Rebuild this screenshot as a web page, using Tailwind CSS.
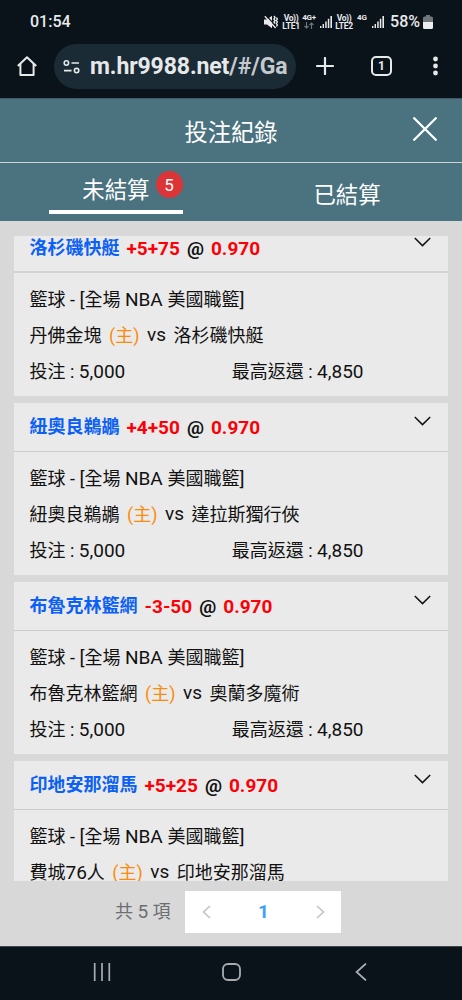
<!DOCTYPE html>
<html lang="zh-Hant">
<head>
    <meta charset="UTF-8">
    <meta name="viewport" content="width=device-width, initial-scale=1.0">
    <title>投注紀錄</title>
    <script src="https://cdn.jsdelivr.net/npm/@tailwindcss/browser@4"></script>
</head>
<body class="bg-[#0b131a] font-[Roboto,'Noto_Sans_CJK_TC',sans-serif]">
    <div class="h-[1000px] w-[462px] flex flex-col overflow-hidden">
        <!-- status bar -->
        <div class="h-11 shrink-0 flex items-center justify-between pl-[30px] pr-[29px] text-[#e8eaeb]">
            <span class="text-base font-medium">01:54</span>
            <div class="flex items-center">
                <svg class="w-[14px] h-[14px]" viewBox="0 0 14 14" fill="none" stroke="currentColor">
                    <path fill="currentColor" stroke="none" d="M0 4.5h3L8 .8v12.4L3 9.5H0z"/>
                    <path stroke="#0b131a" stroke-width="1.2" d="M2 .4l10.8 11.8"/>
                    <path stroke-width="1.3" d="M.8 1.2l10.8 11.8"/>
                    <path stroke-width="1.4" d="M10 1l1 1.5-1 1.5 1 1.5-1 1.5 1 1.5M12.4 2.5l.9 1.5-.9 1.5.9 1.5-.9 1.5.9 1.5-.9 1.5"/>
                </svg>
                <div class="ml-[3px] w-[20px] text-center text-[8.5px] leading-[8px] font-bold whitespace-nowrap">
                    <div class="tracking-tighter">Vo))</div>
                    <div class="tracking-[-0.3px]">LTE1</div>
                </div>
                <div class="w-[16px] h-4 flex flex-col items-center text-[8px] leading-[8px] font-bold whitespace-nowrap">
                    <div class="tracking-tight">4G+</div>
                    <svg class="w-[10px] h-[7px] text-[#71787d]" viewBox="0 0 10 7" fill="none" stroke="currentColor" stroke-width="1.1">
                        <path d="M2.5 0v6M.5 4l2 2 2-2M7.5 7V1M5.5 3l2-2 2 2"/>
                    </svg>
                </div>
                <svg class="ml-[3px] w-[12px] h-[12px]" viewBox="0 0 12 12" fill="currentColor">
                    <path d="M0 10h1.4v2H0zM2.6 8H4v4H2.6zM5.2 5.5h1.5V12H5.2zM7.8 2.8h1.5V12H7.8zM10.4 0H12v12h-1.6z"/>
                </svg>
                <div class="ml-[2px] w-[20px] text-center text-[8.5px] leading-[8px] font-bold whitespace-nowrap">
                    <div class="tracking-tighter">Vo))</div>
                    <div class="tracking-[-0.3px]">LTE2</div>
                </div>
                <div class="ml-[2px] w-[12px] h-4 text-center text-[8px] leading-[8px] font-bold">4G</div>
                <svg class="ml-[4px] w-[12px] h-[12px]" viewBox="0 0 12 12" fill="currentColor">
                    <path d="M0 10h1.4v2H0zM2.6 8H4v4H2.6zM5.2 5.5h1.5V12H5.2zM7.8 2.8h1.5V12H7.8zM10.4 0H12v12h-1.6z"/>
                </svg>
                <span class="ml-[6px] text-base font-medium">58%</span>
                <svg class="ml-[3px] w-[10px] h-[14px]" viewBox="0 0 10 14">
                    <path fill="#70767a" d="M3 0h4v1.5h1.5A1.5 1.5 0 0 1 10 3v4H0V3a1.5 1.5 0 0 1 1.5-1.5H3z"/>
                    <path fill="#eceeef" d="M0 7h10v5.5a1.5 1.5 0 0 1-1.5 1.5h-7A1.5 1.5 0 0 1 0 12.5z"/>
                </svg>
            </div>
        </div>

        <!-- browser bar -->
        <div class="h-[54px] shrink-0 flex items-start text-[#e6e9ea]">
            <svg class="ml-[17px] mt-[12px] w-5 h-5" viewBox="0 0 20 20" fill="none" stroke="currentColor" stroke-width="2" stroke-linejoin="round">
                <path d="M.8 10L10 1.2 19.2 10M3.4 8v11h13.2V8"/>
            </svg>
            <div class="ml-[17px] w-[242px] h-[45px] rounded-full bg-[#1b2b35] flex items-center pl-[9px] pr-[8px]">
                <svg class="w-[17px] h-[14px] shrink-0" viewBox="0 0 17 14" fill="none" stroke="currentColor" stroke-width="1.6">
                    <circle cx="3.4" cy="3" r="2.2"/>
                    <circle cx="13.6" cy="10.6" r="2.2"/>
                    <path d="M8.5 3H16M1 10.6h7.5"/>
                </svg>
                <div class="ml-[10px] mt-px w-[197px] overflow-hidden whitespace-nowrap text-[23px] leading-[30px] font-bold tracking-[-0.1px]">m.hr9988.net<span class="text-[#c3c9cd]">/#/Ga</span></div>
            </div>
            <svg class="ml-[20px] mt-[13px] w-[18px] h-[18px]" viewBox="0 0 18 18" stroke="currentColor" stroke-width="2.2" stroke-linecap="round">
                <path d="M9 1v16M1 9h16"/>
            </svg>
            <div class="ml-[37px] mt-[12px] w-[21px] h-5 rounded-[5px] border-2 border-current flex items-center justify-center text-[12px] font-bold">1</div>
            <svg class="ml-[41px] mt-[12px] w-[5px] h-5" viewBox="0 0 5 20" fill="currentColor">
                <circle cx="2.5" cy="3" r="2.4"/>
                <circle cx="2.5" cy="10" r="2.4"/>
                <circle cx="2.5" cy="17" r="2.4"/>
            </svg>
        </div>

        <!-- page title -->
        <header class="h-[65px] shrink-0 relative flex items-center justify-center bg-[#4a727f] border-t border-t-[#3f5a64] border-b border-b-[#cdd3d7] text-white">
            <h1 class="text-[23.3px] leading-8 pt-[4px]">投注紀錄</h1>
            <svg class="absolute right-[25px] top-[18px] w-6 h-6" viewBox="0 0 24 24" stroke="currentColor" stroke-width="2.3" stroke-linecap="round">
                <path d="M1.2 1.2l21.6 21.6M22.8 1.2L1.2 22.8"/>
            </svg>
        </header>

        <!-- tabs -->
        <nav class="h-[58px] shrink-0 grid grid-cols-2 bg-[#4a727f] text-white text-[22.4px] leading-8">
            <div class="flex justify-center">
                <div class="w-[134px] h-[51px] border-b-4 border-white flex justify-end">
                    <span class="pt-[11px] whitespace-nowrap">未結算</span>
                    <span class="ml-[6px] mt-[8px] w-[27px] h-[27px] rounded-full bg-[#dc3538] flex items-center justify-center text-[17px] shrink-0">5</span>
                </div>
            </div>
            <div class="pt-[16px] pl-px text-center">已結算</div>
        </nav>

        <!-- records -->
        <main class="h-[725px] shrink-0 bg-[#d8d8d8] pt-[15px] text-lg text-[#111]">
            <div class="mx-[14px] h-[645px] overflow-hidden">
                <div class="-mt-[12px] flex flex-col gap-[7px]">
                    <section class="h-[172px] shrink-0 bg-[#eaeaea]">
                        <div class="h-[49px] border-b-2 border-[#d3d3d3] pl-[15.5px] pr-4 flex justify-between font-bold">
                            <div class="flex items-start gap-[7px] pt-[10px]">
                                <span class="text-[#0b60f5]">洛杉磯快艇</span>
                                <span class="text-[19px] text-[#fb0007]">+5+75</span>
                                <span class="text-[19px]">@</span>
                                <span class="text-[19px] text-[#fb0007]">0.970</span>
                            </div>
                            <svg class="mt-[13px] mr-[1px] w-[17px] h-[10px]" viewBox="0 0 17 10" fill="none" stroke="currentColor" stroke-width="1.5"><path d="M.8 1l7.7 7.6L16.2 1"/></svg>
                        </div>
                        <div class="pl-[15.5px] pr-4 pt-[9px] leading-9">
                            <div>籃球 - <span class="text-[19px]">[</span>全場 <span class="text-[19px]">NBA </span>美國職籃<span class="text-[19px]">]</span></div>
                            <div class="flex gap-[7.5px]"><span>丹佛金塊</span><span class="text-[#fa8c0c]">(主)</span><span class="-mt-px text-[19px]">vs</span><span>洛杉磯快艇</span></div>
                            <div class="grid grid-cols-2"><span>投注 : <span class="text-[19px]">5,000</span></span><span class="pl-px">最高返還 : <span class="text-[19px]">4,850</span></span></div>
                        </div>
                    </section>

                    <section class="h-[172px] shrink-0 bg-[#eaeaea]">
                        <div class="h-[49px] border-b border-[#cbcbcb] pl-[15.5px] pr-4 flex justify-between font-bold">
                            <div class="flex items-start gap-[7px] pt-[10px]">
                                <span class="text-[#0b60f5]">紐奧良鵜鶘</span>
                                <span class="text-[19px] text-[#fb0007]">+4+50</span>
                                <span class="text-[19px]">@</span>
                                <span class="text-[19px] text-[#fb0007]">0.970</span>
                            </div>
                            <svg class="mt-[13px] mr-[1px] w-[17px] h-[10px]" viewBox="0 0 17 10" fill="none" stroke="currentColor" stroke-width="1.5"><path d="M.8 1l7.7 7.6L16.2 1"/></svg>
                        </div>
                        <div class="pl-[15.5px] pr-4 pt-[9px] leading-9">
                            <div>籃球 - <span class="text-[19px]">[</span>全場 <span class="text-[19px]">NBA </span>美國職籃<span class="text-[19px]">]</span></div>
                            <div class="flex gap-[7.5px]"><span>紐奧良鵜鶘</span><span class="text-[#fa8c0c]">(主)</span><span class="-mt-px text-[19px]">vs</span><span>達拉斯獨行俠</span></div>
                            <div class="grid grid-cols-2"><span>投注 : <span class="text-[19px]">5,000</span></span><span class="pl-px">最高返還 : <span class="text-[19px]">4,850</span></span></div>
                        </div>
                    </section>

                    <section class="h-[172px] shrink-0 bg-[#eaeaea]">
                        <div class="h-[49px] border-b border-[#cbcbcb] pl-[15.5px] pr-4 flex justify-between font-bold">
                            <div class="flex items-start gap-[7px] pt-[10px]">
                                <span class="text-[#0b60f5]">布魯克林籃網</span>
                                <span class="text-[19px] text-[#fb0007]">-3-50</span>
                                <span class="text-[19px]">@</span>
                                <span class="text-[19px] text-[#fb0007]">0.970</span>
                            </div>
                            <svg class="mt-[13px] mr-[1px] w-[17px] h-[10px]" viewBox="0 0 17 10" fill="none" stroke="currentColor" stroke-width="1.5"><path d="M.8 1l7.7 7.6L16.2 1"/></svg>
                        </div>
                        <div class="pl-[15.5px] pr-4 pt-[9px] leading-9">
                            <div>籃球 - <span class="text-[19px]">[</span>全場 <span class="text-[19px]">NBA </span>美國職籃<span class="text-[19px]">]</span></div>
                            <div class="flex gap-[7.5px]"><span>布魯克林籃網</span><span class="text-[#fa8c0c]">(主)</span><span class="-mt-px text-[19px]">vs</span><span>奧蘭多魔術</span></div>
                            <div class="grid grid-cols-2"><span>投注 : <span class="text-[19px]">5,000</span></span><span class="pl-px">最高返還 : <span class="text-[19px]">4,850</span></span></div>
                        </div>
                    </section>

                    <section class="h-[172px] shrink-0 bg-[#eaeaea]">
                        <div class="h-[49px] border-b border-[#cbcbcb] pl-[15.5px] pr-4 flex justify-between font-bold">
                            <div class="flex items-start gap-[7px] pt-[10px]">
                                <span class="text-[#0b60f5]">印地安那溜馬</span>
                                <span class="text-[19px] text-[#fb0007]">+5+25</span>
                                <span class="text-[19px]">@</span>
                                <span class="text-[19px] text-[#fb0007]">0.970</span>
                            </div>
                            <svg class="mt-[13px] mr-[1px] w-[17px] h-[10px]" viewBox="0 0 17 10" fill="none" stroke="currentColor" stroke-width="1.5"><path d="M.8 1l7.7 7.6L16.2 1"/></svg>
                        </div>
                        <div class="pl-[15.5px] pr-4 pt-[9px] leading-9">
                            <div>籃球 - <span class="text-[19px]">[</span>全場 <span class="text-[19px]">NBA </span>美國職籃<span class="text-[19px]">]</span></div>
                            <div class="flex gap-[7.5px]"><span>費城<span class="text-[19px]">76</span>人</span><span class="text-[#fa8c0c]">(主)</span><span class="-mt-px text-[19px]">vs</span><span>印地安那溜馬</span></div>
                        </div>
                    </section>
                </div>
            </div>

            <!-- pagination -->
            <div class="mt-[10px] ml-[115px] flex items-center text-[#6c6e72]">
                <span class="w-[70px] whitespace-nowrap">共 <span class="text-[19px]">5</span> 項</span>
                <div class="w-[156px] h-[42px] bg-white flex items-center justify-between pl-[17px] pr-[16px]">
                    <svg class="w-[9px] h-[14px] text-[#c0c4cc]" viewBox="0 0 9 14" fill="none" stroke="currentColor" stroke-width="1.7"><path d="M8 1L1.5 7 8 13"/></svg>
                    <span class="text-[#409eff] text-[19px] font-bold">1</span>
                    <svg class="w-[9px] h-[14px] text-[#c0c4cc]" viewBox="0 0 9 14" fill="none" stroke="currentColor" stroke-width="1.7"><path d="M1 1l6.5 6L1 13"/></svg>
                </div>
            </div>
        </main>

        <!-- android navigation -->
        <div class="h-[54px] shrink-0 border-t border-[#3f454a] flex items-start pt-[16px] text-[#a9adb0]">
            <svg class="ml-[93px] w-[18px] h-[18px]" viewBox="0 0 18 18" stroke="currentColor" stroke-width="1.7"><path d="M1.7 0v18M9 0v18M16.3 0v18"/></svg>
            <svg class="ml-[111px] w-[19px] h-[18px]" viewBox="0 0 19 18" fill="none" stroke="currentColor" stroke-width="1.8"><rect x="1" y="1" width="17" height="16" rx="5"/></svg>
            <svg class="ml-[114px] w-[12px] h-[18px]" viewBox="0 0 12 18" fill="none" stroke="currentColor" stroke-width="1.8"><path d="M11 .6L1.6 9l9.4 8.4"/></svg>
        </div>
    </div>
</body>
</html>
